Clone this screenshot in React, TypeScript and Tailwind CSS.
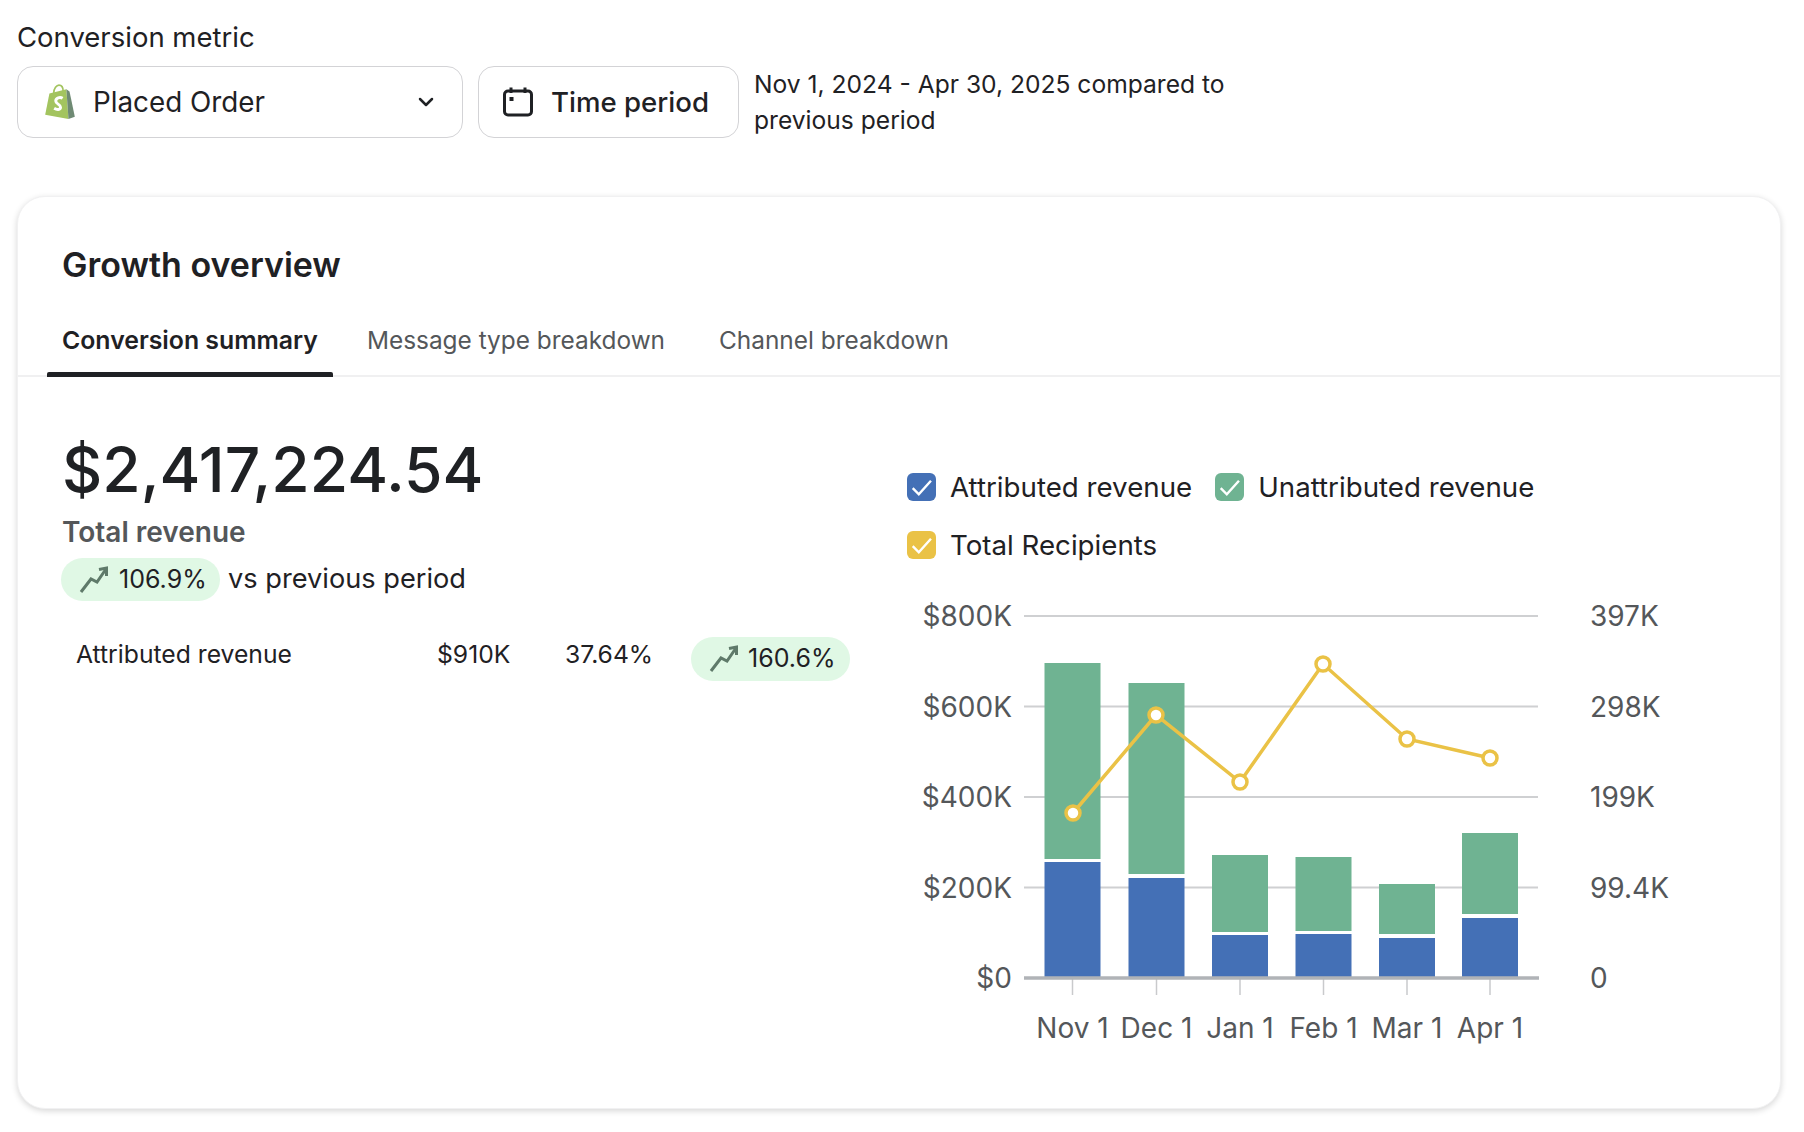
import { ChevronDown } from "lucide-react";

const bars = [
  { x: 1044.5, greenTop: 662, greenBottom: 858, blueTop: 861 },
  { x: 1128.5, greenTop: 682, greenBottom: 873, blueTop: 877 },
  { x: 1212, greenTop: 854, greenBottom: 931, blueTop: 934 },
  { x: 1295.5, greenTop: 856, greenBottom: 930, blueTop: 933 },
  { x: 1379, greenTop: 883, greenBottom: 933, blueTop: 937 },
  { x: 1462, greenTop: 832, greenBottom: 913, blueTop: 917 },
];

const points = [
  [1073, 812],
  [1156, 714],
  [1240, 781],
  [1323, 663],
  [1407, 738],
  [1490, 757],
];

const yLabels = [
  { y: 615, left: "$800K", right: "397K" },
  { y: 705.5, left: "$600K", right: "298K" },
  { y: 796, left: "$400K", right: "199K" },
  { y: 886.5, left: "$200K", right: "99.4K" },
  { y: 977, left: "$0", right: "0" },
];

const months = ["Nov 1", "Dec 1", "Jan 1", "Feb 1", "Mar 1", "Apr 1"];

function TrendIcon() {
  return (
    <svg className="w-[30px] h-[30px] shrink-0" viewBox="0 0 30 30" fill="none" stroke="#5f7a6a" strokeWidth={3}>
      <path d="M3 27 L13 14 L19 17 L28 4" />
      <path d="M21 4.5 L28.5 3 V11" />
    </svg>
  );
}

function ShopifyBag() {
  return (
    <svg className="w-[32px] h-[36px] shrink-0" viewBox="0 0 30 34">
      <path d="M1 29 L5 9 L21 5 L23 33 Z" fill="#a3c45f" />
      <path d="M21 5 L24 7 L29 31 L23 33 Z" fill="#6f8a74" />
      <path d="M9 9 C9 4 12 1 14 1 C17 1 18 4 18 7" fill="none" stroke="#a3c45f" strokeWidth={1.6} />
      <path d="M17.5 13.5 C15 12 11 13 11 16 C11 19 15.5 19 15.5 22 C15.5 24.5 12 24.5 9.5 23" fill="none" stroke="#fff" strokeWidth={2.8} />
    </svg>
  );
}

function CalendarIcon() {
  return (
    <svg className="w-[30px] h-[30px] shrink-0" viewBox="0 0 30 30" fill="none" stroke="#1f2124" strokeWidth={3}>
      <rect x="1.5" y="4" width="27" height="24" rx="3.5" />
      <path d="M8 0.5 V6 M22 0.5 V6" />
      <rect x="6.5" y="10" width="4" height="4" fill="#1f2124" stroke="none" />
    </svg>
  );
}

function Check({ className }: { className: string }) {
  return (
    <span className={`w-[29px] h-[28px] rounded-[6px] flex items-center justify-center shrink-0 ${className}`}>
      <svg className="w-[27px] h-[27px]" viewBox="0 0 20 20" fill="none" stroke="#fff" strokeWidth={1.8}>
        <path d="M3.5 10.5 L8 15 L17 5" />
      </svg>
    </span>
  );
}

function Chart() {
  // coords below are page coords, viewBox just shifts them
  return (
    <svg className="block mt-[27.5px]" width="800" height="470" viewBox="907 590 800 470" fontFamily="Inter, sans-serif">
      {yLabels.slice(0, 4).map((l) => (
        <line key={l.y} x1="1024" x2="1538" y1={l.y} y2={l.y} stroke="#cfd0d2" strokeWidth="2" />
      ))}
      {bars.map((b) => (
        <g key={b.x}>
          <rect x={b.x} y={b.greenTop} width="56" height={b.greenBottom - b.greenTop} fill="#6fb392" />
          <rect x={b.x} y={b.blueTop} width="56" height={976 - b.blueTop} fill="#4470b6" />
          <line x1={b.x + 28} x2={b.x + 28} y1="977" y2="994" stroke="#c9cacc" strokeWidth="1.5" />
        </g>
      ))}
      <line x1="1024" x2="1539" y1="977" y2="977" stroke="#b0b3b7" strokeWidth="3.5" />
      <polyline points={points.map((p) => p.join(",")).join(" ")} fill="none" stroke="#eac246" strokeWidth="3.5" />
      {points.map((p) => (
        <circle key={p[0]} cx={p[0]} cy={p[1]} r="7" fill="#fff" stroke="#eac246" strokeWidth="3.5" />
      ))}
      {yLabels.map((l) => (
        <g key={l.y} fontSize="28" fill="#54575a">
          <text x="1012" y={l.y + 10} textAnchor="end">{l.left}</text>
          <text x="1590" y={l.y + 10}>{l.right}</text>
        </g>
      ))}
      {months.map((m, i) => (
        <text key={m} x={bars[i].x + 28} y="1037" textAnchor="middle" fontSize="28" fill="#54575a">{m}</text>
      ))}
    </svg>
  );
}

export default function App() {
  return (
    <div className="min-h-screen bg-white pl-[17px] pr-[23px] pt-[19px] text-[#1f2124] font-['Inter',sans-serif]">
      <div className="text-[27.5px] leading-[36px]">Conversion metric</div>
      <div className="flex items-center mt-[11px]">
        <div className="w-[446px] h-[72px] border-[1.5px] border-[#d3d3d6] rounded-[16px] flex items-center pl-[26px] pr-[24px] gap-[17px]">
          <ShopifyBag />
          <span className="text-[27.8px] flex-1 pt-[2px]">Placed Order</span>
          <ChevronDown className="w-[24px] h-[24px]" strokeWidth={2.5} />
        </div>
        <div className="ml-[15px] w-[261px] h-[72px] border-[1.5px] border-[#d3d3d6] rounded-[16px] flex items-center pl-[24px] gap-[18px]">
          <CalendarIcon />
          <span className="text-[27.6px] font-medium pt-[1px]">Time period</span>
        </div>
        <div className="ml-[15px] w-[500px] text-[24.6px] leading-[36px]">
          Nov 1, 2024 - Apr 30, 2025 compared to previous period
        </div>
      </div>

      <div className="mt-[58px] h-[913px] rounded-[28px] bg-white border border-[#f1f1f2] shadow-[0_2px_6px_rgba(0,0,0,0.16)]">
        <h2 className="pl-[44px] pt-[46px] text-[34px] leading-[44px] font-semibold">Growth overview</h2>

        <div className="mt-[24px] flex h-[66px] border-b-2 border-[#f0f0f1] pl-[29px] text-[24.4px]">
          <div className="relative px-[15px] pt-[11px] font-semibold text-[24.8px]">
            Conversion summary
            <span className="absolute left-0 right-0 bottom-[-2px] h-[5px] rounded-t-[2px] bg-[#1f2124]" />
          </div>
          <div className="ml-[34px] pt-[11px] text-[#54575a]">Message type breakdown</div>
          <div className="ml-[54px] pt-[11px] text-[#54575a]">Channel breakdown</div>
        </div>

        <div className="flex">
          <div className="w-[889px] pl-[44px] pt-[57px]">
            <div className="text-[62.3px] leading-[72px] font-medium">$2,417,224.54</div>
            <div className="mt-[8px] text-[28px] leading-[36px] font-semibold text-[#54575a]">Total revenue</div>
            <div className="flex items-center mt-[8px] -ml-px">
              <span className="w-[159px] h-[43px] rounded-full bg-[#e0f8e5] flex items-center pl-[17px] gap-[11px] text-[25px]">
                <TrendIcon />
                106.9%
              </span>
              <span className="ml-[8px] text-[27.2px]">vs previous period</span>
            </div>
            <div className="flex items-center mt-[28px] text-[24.7px]">
              <span className="ml-[14px] w-[361px]">Attributed revenue</span>
              <span className="w-[128px]">$910K</span>
              <span className="w-[126px]">37.64%</span>
              <span className="w-[159px] h-[44px] rounded-full bg-[#e0f8e5] flex items-center pl-[17px] gap-[10px] mt-[8px] text-[25px]">
                <TrendIcon />
                160.6%
              </span>
            </div>
          </div>

          <div className="pt-[92px]">
            <div className="flex items-center text-[27.7px] leading-[36px]">
              <Check className="bg-[#4470b6]" />
              <span className="ml-[14px]">Attributed revenue</span>
              <Check className="ml-[23px] bg-[#6fb392]" />
              <span className="ml-[14px]">Unattributed revenue</span>
            </div>
            <div className="flex items-center text-[27.7px] leading-[36px] mt-[22px]">
              <Check className="bg-[#eac246]" />
              <span className="ml-[14px]">Total Recipients</span>
            </div>
            <Chart />
          </div>
        </div>
      </div>
    </div>
  );
}
